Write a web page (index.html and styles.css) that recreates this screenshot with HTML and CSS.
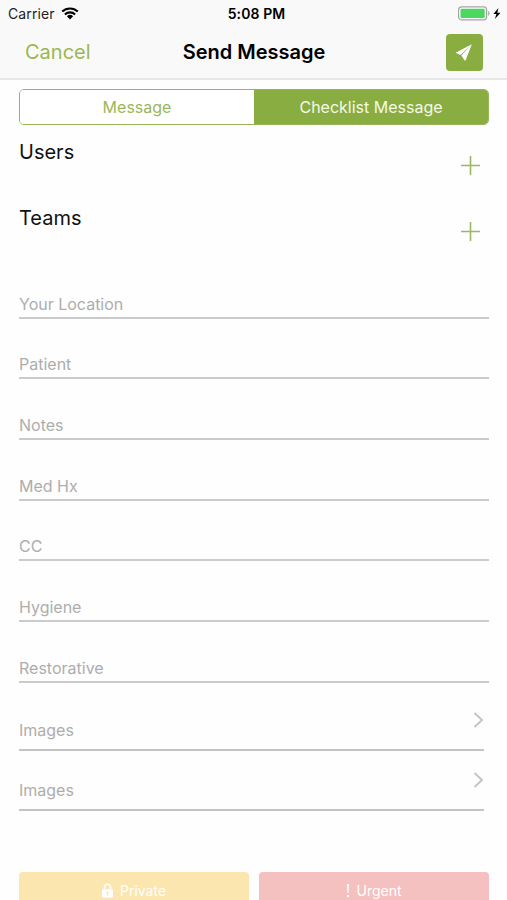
FILE: index.html
```html
<!DOCTYPE html>
<html lang="en">
<head>
<meta charset="utf-8">
<title>Send Message</title>
<link rel="stylesheet" href="styles.css">
</head>
<body>
<header class="top">
  <div class="status">
    <div class="carrier"><span class="carrier-name">Carrier</span>
      <svg width="18" height="13" viewBox="0 0 18 13"><path d="M1.2 4.6a11.3 11.3 0 0 1 15.6 0M3.9 7.4a7.4 7.4 0 0 1 10.2 0" fill="none" stroke="#000" stroke-width="2.1"/><path d="M5.9 9.3a4.5 4.5 0 0 1 6.2 0L9 12.4z"/></svg>
    </div>
    <div class="time">5:08 PM</div>
    <div class="battery">
      <svg width="44" height="15" viewBox="0 0 44 15"><rect x=".6" y=".9" width="28" height="12.9" rx="3" fill="#fff" stroke="#a5a5a8" stroke-width="1.2"/><rect x="2.5" y="2.8" width="24.2" height="9.1" rx="1" fill="#4cd75f"/><path d="M30.2 5c1.8.6 1.8 4.2 0 4.8z" fill="#a5a5a8"/><path d="M40.4 1.9 35.4 8h3l-1.5 5 5.6-6.3h-3.2z"/></svg>
    </div>
  </div>
  <nav class="bar">
    <a class="cancel">Cancel</a>
    <h1 class="title">Send Message</h1>
    <button class="send" aria-label="Send"><svg width="37" height="37" viewBox="0 0 37 37"><path d="M25.8 10.2 9.6 18.7l4.9 2.3zM25.8 10.2 15.4 21.6l.3.4 3.1 4.8zM25.8 10.2 17 22.3l2.5 4.5z" fill="#fff"/></svg></button>
  </nav>
</header>
<main>
  <div class="segments"><button class="segment"><span class="seg-message">Message</span></button><button class="segment active"><span class="seg-checklist">Checklist Message</span></button></div>
  <section class="people">
    <div class="group"><h2 class="users">Users</h2><svg class="plus" width="19" height="19" viewBox="0 0 19 19"><path d="M9.5 0v19M0 9.5h19"/></svg></div>
    <div class="group"><h2 class="teams">Teams</h2><svg class="plus" width="19" height="19" viewBox="0 0 19 19"><path d="M9.5 0v19M0 9.5h19"/></svg></div>
  </section>
  <section class="fields">
    <div class="field"><span>Your Location</span></div>
    <div class="field"><span>Patient</span></div>
    <div class="field"><span>Notes</span></div>
    <div class="field"><span>Med Hx</span></div>
    <div class="field"><span>CC</span></div>
    <div class="field"><span>Hygiene</span></div>
    <div class="field"><span>Restorative</span></div>
  </section>
  <section class="attachments">
    <div class="attachment"><span>Images</span><svg class="chevron" width="11" height="16" viewBox="0 0 11 16"><path d="m1.5 1 7.5 7-7.5 7"/></svg></div>
    <div class="attachment"><span>Images</span><svg class="chevron" width="11" height="16" viewBox="0 0 11 16"><path d="m1.5 1 7.5 7-7.5 7"/></svg></div>
  </section>
  <div class="actions">
    <button class="action private"><svg width="11" height="15" viewBox="0 0 11 15"><path d="M2.5 7V4.3a3 3 0 0 1 6 0V7" fill="none" stroke="#fff" stroke-width="1.6"/><rect y="6.2" width="11" height="8.3" rx="1.2" fill="#fff"/><path d="M4.5 8.7h2v1.4L6 10.7V13H5v-2.3l-.5-.6z" fill="#fce6af"/></svg><span>Private</span></button>
    <button class="action urgent"><svg width="4" height="14" viewBox="0 0 4 14"><path d="M1 0h2l-.4 9H1.4zM1 11h2v2H1z" fill="#fff"/></svg><span>Urgent</span></button>
  </div>
</main>
</body>
</html>
```
FILE: styles.css
```css
* { box-sizing: border-box; }
body {
  margin: 0;
  height: 900px;
  overflow: hidden;
  background: #fefefe;
  color: #000;
  font-family: Inter, "Liberation Sans", sans-serif;
}
h1, h2 { margin: 0; }
button { padding: 0; border: 0; font-family: inherit; }
svg { display: block; flex: none; }
.top { height: 80px; background: #f9f9f9; border-bottom: 2px solid #e8e8e8; }
.status {
  display: grid;
  grid-template-columns: 1fr auto 1fr;
  align-items: center;
  height: 27px;
  padding: 0 5px 0 8px;
  font-size: 14px;
}
.carrier { display: flex; align-items: center; gap: 6px; color: #222; }
.carrier-name { letter-spacing: .1px; }
.time { font-weight: 600; letter-spacing: .1px; padding-left: 3px; }
.battery { justify-self: end; }
.bar {
  display: grid;
  grid-template-columns: 1fr auto 1fr;
  align-items: center;
  height: 50px;
  padding: 0 24px 0 25px;
}
.cancel { color: #9ab850; font-size: 20px; }
.title { font-size: 20px; font-weight: 600; line-height: 30px; }
.send { justify-self: end; width: 37px; height: 37px; border-radius: 4px; background: #8aad42; }
.segments {
  display: grid;
  grid-template-columns: 234px 1fr;
  height: 36px;
  margin: 9px 18px 0 19px;
  overflow: hidden;
  border: 1.5px solid #96b659;
  border-radius: 5px;
}
.segment { background: #fff; color: #9ab85a; font-size: 16px; }
.segment.active { background: #8aad42; color: #f5f9e9; }
.people { margin: 7px 27px 0 19px; }
.group { display: flex; justify-content: space-between; height: 66px; }
.group h2 { font-size: 20px; font-weight: 400; line-height: 41px; color: #111; }
.plus { align-self: center; }
.plus path { fill: none; stroke: #9bb962; stroke-width: 1.6; }
.fields { margin: -6px 18px 0 19px; }
.field {
  height: 60.67px;
  display: flex;
  align-items: flex-end;
  padding-bottom: 2px;
  border-bottom: 2px solid #cbcbcb;
  color: #adadad;
  font-size: 16px;
  line-height: 22px;
}
.attachments { margin: 7.3px 23px 0 19px; }
.attachment {
  display: flex;
  align-items: flex-end;
  justify-content: space-between;
  height: 60.67px;
  padding-bottom: 8px;
  border-bottom: 2px solid #c4c4c4;
  color: #adadad;
  font-size: 16px;
  line-height: 22px;
}
.chevron { margin-bottom: 13px; }
.chevron path { fill: none; stroke: #c5c5c7; stroke-width: 2; }
.actions { display: grid; grid-template-columns: 1fr 1fr; gap: 10px; margin: 61px 18px 0 19px; }
.action {
  display: flex;
  justify-content: center;
  align-items: center;
  height: 37px;
  border-radius: 4px;
  color: #fff;
  font-size: 14px;
}
.private { gap: 7px; background: #fce6af; }
.urgent { gap: 6px; background: #f5c0c0; }
```
